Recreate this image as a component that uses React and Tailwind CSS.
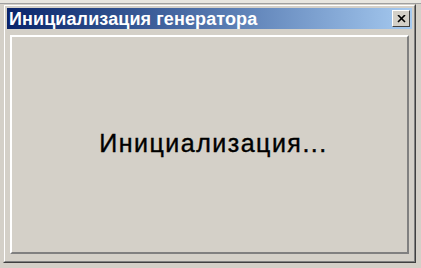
export default function App() {
  return (
    <div className="w-[421px] h-[268px] bg-[#d4d0c8] overflow-hidden relative" style={{ fontFamily: '"Liberation Sans", Arial, sans-serif' }}>
      <div className="h-[4px] bg-[#e8e6e0] border-b border-[#a0a0a0]"></div>
      <div className="ml-[3px] w-[413px] h-[259px] flex flex-col border border-t-[#d4d0c8] border-l-[#d4d0c8] border-r-[#404040] border-b-[#404040]">
        <div className="flex-1 flex flex-col border border-t-white border-l-white border-r-[#808080] border-b-[#808080] p-[2px]">
          <div className="h-[21px] flex items-center justify-between pl-[2px] pr-[2px] bg-gradient-to-r from-[#0a246a] to-[#a6caf0]">
            <span className="text-white font-bold text-[18px] leading-none tracking-[0.1px]">Инициализация генератора</span>
            <div className="w-[18px] h-[17px] bg-[#d4d0c8] border border-t-white border-l-white border-r-[#404040] border-b-[#404040] flex items-center justify-center">
              <svg width="9" height="8" viewBox="0 0 9 8">
                <path d="M1 0 L8 7 M8 0 L1 7" stroke="#000" strokeWidth="1.6" />
              </svg>
            </div>
          </div>
          <div className="flex-1 mt-[6px] mx-[3px] mb-[5px] border-2 border-t-white border-l-white border-r-[#808080] border-b-[#808080] flex items-center justify-center bg-[#d4d0c8]">
            <span className="text-black text-[25px] leading-none tracking-[1.5px] [-webkit-text-stroke:0.4px_black] -mt-[2px] ml-[8px]">Инициализация...</span>
          </div>
        </div>
      </div>
    </div>
  );
}
